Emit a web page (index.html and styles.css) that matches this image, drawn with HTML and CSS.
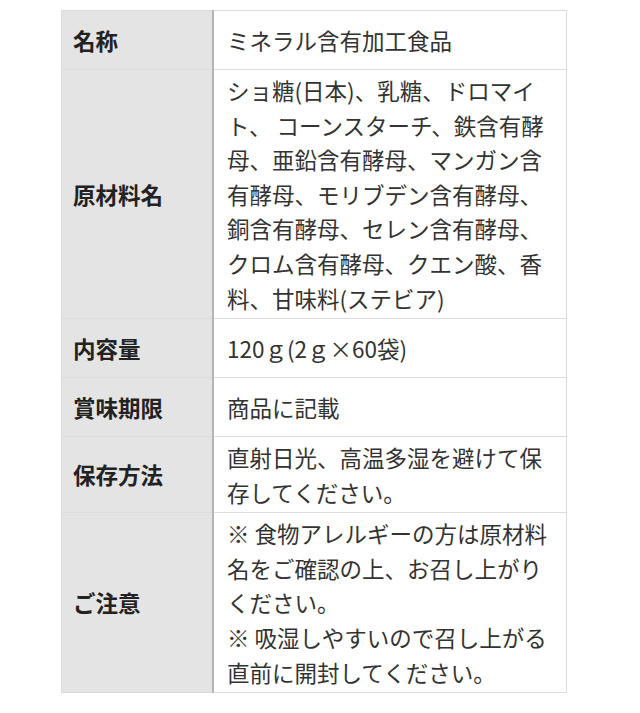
FILE: index.html
```html
<!DOCTYPE html>
<html lang="ja">
<head>
<meta charset="utf-8">
<link rel="stylesheet" href="styles.css">
</head>
<body>
<div class="wrap">
<table class="spec">
  <tr>
    <th>名称</th>
    <td>ミネラル含有加工食品</td>
  </tr>
  <tr>
    <th>原材料名</th>
    <td>ショ糖(日本)、乳糖、ドロマイ<br>ト、 コーンスターチ、鉄含有酵<br>母、亜鉛含有酵母、マンガン含<br>有酵母、モリブデン含有酵母、<br>銅含有酵母、セレン含有酵母、<br>クロム含有酵母、クエン酸、香<br>料、甘味料(ステビア)</td>
  </tr>
  <tr>
    <th>内容量</th>
    <td>120ｇ(2ｇ×60袋)</td>
  </tr>
  <tr>
    <th>賞味期限</th>
    <td>商品に記載</td>
  </tr>
  <tr>
    <th>保存方法</th>
    <td>直射日光、高温多湿を避けて保存してください。</td>
  </tr>
  <tr>
    <th>ご注意</th>
    <td>※ 食物アレルギーの方は原材料名をご確認の上、お召し上がりください。<br>※ 吸湿しやすいので召し上がる直前に開封してください。</td>
  </tr>
</table>
</div>
</body>
</html>
```

FILE: styles.css
```css
html, body {
  margin: 0;
  padding: 0;
  background: #ffffff;
}
.wrap {
  padding: 10px 0 0 61px;
}
.spec {
  width: 506px;
  border-collapse: collapse;
  font-family: "Noto Sans CJK JP", "Noto Sans", sans-serif;
  font-size: 22.5px;
  line-height: 34.6px;
  table-layout: fixed;
}
.spec th,
.spec td {
  border: 1px solid #dcdcdc;
  vertical-align: middle;
}
.spec th {
  width: 129px;
  background: #e4e4e4;
  color: #222222;
  font-weight: bold;
  text-align: left;
  padding: 11.7px 10px 11.7px 11px;
  border-right: 2px solid #b4b4b4;
}
.spec td {
  background: #ffffff;
  color: #333333;
  font-weight: normal;
  padding: 3px 12px 3px 13px;
}
```
